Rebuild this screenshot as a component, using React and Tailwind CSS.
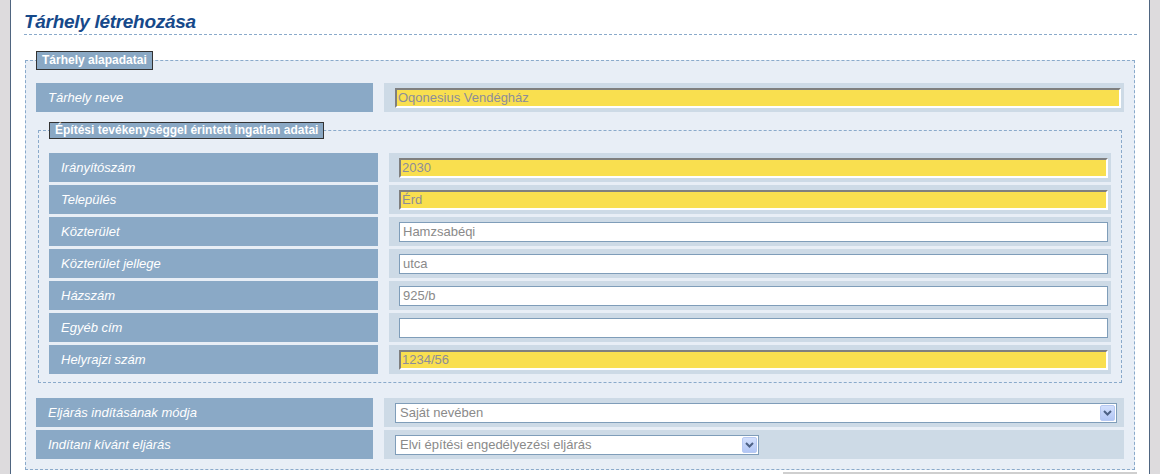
import React from "react";

const font = { fontFamily: '"Liberation Sans", Arial, sans-serif' };

const Label = ({ children, w }) => (
  <div className={`${w} flex h-[29px] shrink-0 items-center bg-[#8aa9c6] pl-[12px] text-[13px] italic text-white`}>
    {children}
  </div>
);

const TextInput = ({ value, required }) =>
  required ? (
    <div className="flex h-[20px] flex-1 items-center border-2 border-t-[#7f7f7f] border-l-[#7f7f7f] border-b-white border-r-white bg-[#f9df4f] pl-[1px] text-[13px] text-[#8d8d99]">
      {value}
    </div>
  ) : (
    <div className="flex h-[20px] flex-1 items-center border border-[#7f9db9] bg-white pl-[3px] text-[13px] text-[#8a8a8a]">
      {value}
    </div>
  );

const Select = ({ value, w }) => (
  <div className={`${w} flex h-[20px] items-center justify-between border border-[#7f9db9] bg-white pl-[4px] pr-[1px] text-[13px] text-[#8a8a8a]`}>
    <span>{value}</span>
    <span className="flex h-[16px] w-[15px] items-center justify-center rounded-[2px] border border-[#b7c9f2] bg-gradient-to-b from-[#d3e0fd] to-[#b2c6f5]">
      <svg width="9" height="6" viewBox="0 0 9 6">
        <path d="M1 1 L4.5 4.5 L8 1" stroke="#4d6185" strokeWidth="2" fill="none" />
      </svg>
    </span>
  </div>
);

const Legend = ({ children, h }) => (
  <legend className={`${h} ml-0 border border-[#333] bg-[#8aa8c4] px-[5px] text-[12px] font-bold text-white`}>
    {children}
  </legend>
);

const innerRows = [
  ["Irányítószám", "2030", true],
  ["Település", "Érd", true],
  ["Közterület", "Hamzsabéqi", false],
  ["Közterület jellege", "utca", false],
  ["Házszám", "925/b", false],
  ["Egyéb cím", "", false],
  ["Helyrajzi szám", "1234/56", true],
];

export default function App() {
  return (
    <div style={font} className="flex h-[474px] w-[1160px] overflow-hidden bg-[#dddbdd]">
      <div className="ml-[10px] w-[1140px] border-x border-[#4f6580] bg-white pl-[13px] pr-[12px]">
        <h1 className="mt-[10px] border-b border-dashed border-[#8aaacb] text-[19px] font-bold italic leading-[24px] tracking-[-0.3px] text-[#16498a]">
          Tárhely létrehozása
        </h1>

        <fieldset className="ml-[1px] mr-[2px] mt-[16px] border border-dashed border-[#8aaacb] bg-[#e8eef6] px-[10px] pb-[10px] pt-[13px]">
          <Legend h="h-[19px] leading-[17px]">Tárhely alapadatai</Legend>

          <div className="flex gap-[11px]">
            <Label w="w-[337px]">Tárhely neve</Label>
            <div className="flex h-[29px] flex-1 items-center bg-[#cddae6] pl-[11px] pr-[3px]">
              <TextInput value="Oqonesius Vendégház" required />
            </div>
          </div>

          <fieldset className="ml-[2px] mr-[2px] mt-[10px] border border-dashed border-[#8aaacb] px-[10px] pb-[8px] pt-[14px]">
            <Legend h="h-[17px] leading-[15px]">Építési tevékenységgel érintett ingatlan adatai</Legend>
            <div className="flex flex-col gap-[3px]">
              {innerRows.map(([label, value, req]) => (
                <div key={label} className="flex gap-[11px]">
                  <Label w="w-[329px]">{label}</Label>
                  <div className="flex h-[29px] flex-1 items-center bg-[#cddae6] pl-[10px] pr-[3px]">
                    <TextInput value={value} required={req} />
                  </div>
                </div>
              ))}
            </div>
          </fieldset>

          <div className="mt-[15px] flex flex-col gap-[3px]">
            <div className="flex gap-[11px]">
              <Label w="w-[337px]">Eljárás indításának módja</Label>
              <div className="flex h-[29px] flex-1 items-center bg-[#cddae6] pl-[11px]">
                <Select value="Saját nevében" w="w-[722px]" />
              </div>
            </div>
            <div className="flex gap-[11px]">
              <Label w="w-[337px]">Indítani kívánt eljárás</Label>
              <div className="flex h-[29px] flex-1 items-center bg-[#cddae6] pl-[11px]">
                <Select value="Elvi építési engedélyezési eljárás" w="w-[364px]" />
              </div>
            </div>
          </div>
        </fieldset>

        <div className="mt-[2px] flex justify-end">
          <div className="h-[2px] w-[354px] bg-[#cfcfcf]" />
        </div>
      </div>
    </div>
  );
}
